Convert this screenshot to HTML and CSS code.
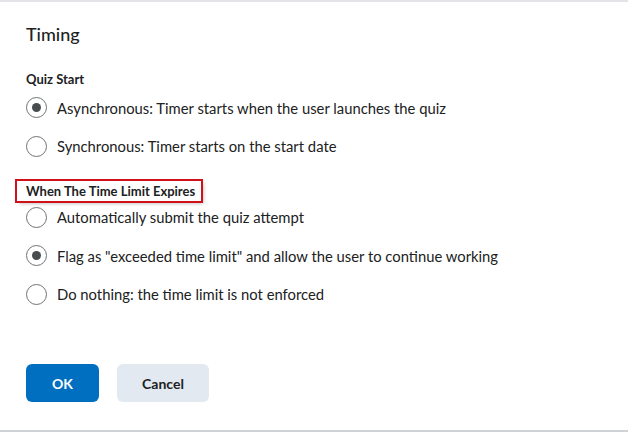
FILE: index.html
```html
<!DOCTYPE html>
<html>
<head>
<meta charset="utf-8">
<link rel="stylesheet" href="styles.css">
</head>
<body>
<div class="dialog">
  <h1 class="title">Timing</h1>
  <fieldset class="group">
    <legend class="group-label">Quiz Start</legend>
    <label class="radio-row"><span class="radio checked"></span><span class="radio-text">Asynchronous: Timer starts when the user launches the quiz</span></label>
    <label class="radio-row"><span class="radio"></span><span class="radio-text">Synchronous: Timer starts on the start date</span></label>
  </fieldset>
  <fieldset class="group group-second">
    <legend class="group-label highlighted">When The Time Limit Expires</legend>
    <label class="radio-row"><span class="radio"></span><span class="radio-text">Automatically submit the quiz attempt</span></label>
    <label class="radio-row"><span class="radio checked"></span><span class="radio-text">Flag as "exceeded time limit" and allow the user to continue working</span></label>
    <label class="radio-row"><span class="radio"></span><span class="radio-text">Do nothing: the time limit is not enforced</span></label>
  </fieldset>
  <div class="actions">
    <button class="btn btn-primary">OK</button>
    <button class="btn btn-secondary">Cancel</button>
  </div>
</div>
</body>
</html>
```
FILE: styles.css
```css
html, body {
  margin: 0;
  padding: 0;
  background: #ffffff;
}
body {
  font-family: Lato, "Noto Sans", sans-serif;
  color: #202122;
  width: 628px;
  height: 432px;
  overflow: hidden;
}
.dialog {
  box-sizing: border-box;
  height: 432px;
  margin: 0;
  border-top: 2px solid #e3e4e8;
  border-bottom: 2px solid #cfd2d6;
  padding: 20px 0 0 26px;
}
.title {
  margin: 0;
  font-size: 18px;
  font-weight: 500;
  line-height: 24px;
}
.group {
  border: 0;
  margin: 24px 0 0 0;
  padding: 0;
}
.group-second {
  margin-top: 15.5px;
}
.group-label {
  padding: 0;
  font-size: 13px;
  font-weight: 700;
  line-height: 18px;
  margin-bottom: 0.5px;
}
.highlighted {
  line-height: 20px;
  margin-left: -9px;
  margin-bottom: -3px;
  padding: 0 6px 0 9px;
  outline: 2px solid #d0101b;
  box-shadow: 2px 2px 4px rgba(0,0,0,0.35);
}
.radio-row {
  display: flex;
  align-items: center;
  gap: 10px;
  height: 38.5px;
}
.radio {
  box-sizing: border-box;
  width: 21px;
  height: 21px;
  border: 1px solid #6e7376;
  border-radius: 50%;
  display: flex;
  align-items: center;
  justify-content: center;
  flex: none;
}
.radio.checked::after {
  content: "";
  width: 9px;
  height: 9px;
  border-radius: 50%;
  background: #494c4e;
}
.radio-text {
  font-size: 14.8px;
  line-height: 20px;
}
.actions {
  display: flex;
  gap: 18px;
  margin-top: 50.5px;
}
.btn {
  font-family: Lato, "Noto Sans", sans-serif;
  font-size: 14px;
  font-weight: 700;
  height: 38px;
  border: 0;
  border-radius: 6px;
  padding: 0;
  color: #202122;
}
.btn-primary {
  width: 73px;
  background: #006fbf;
  color: #ffffff;
}
.btn-secondary {
  width: 92px;
  background: #e3e9f1;
}
```
